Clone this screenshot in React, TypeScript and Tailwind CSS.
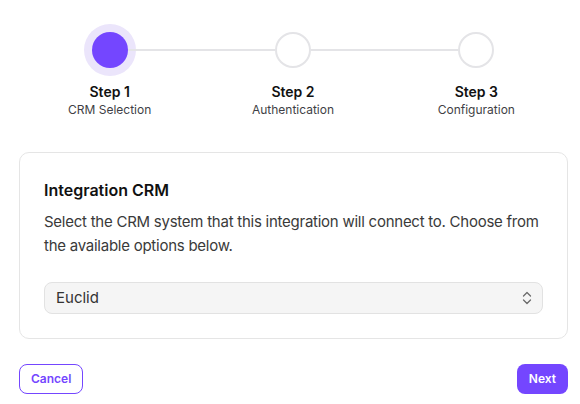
import { useState } from 'react';

interface Step {
  title: string;
  subtitle: string;
}

const STEPS: Step[] = [
  { title: 'Step 1', subtitle: 'CRM Selection' },
  { title: 'Step 2', subtitle: 'Authentication' },
  { title: 'Step 3', subtitle: 'Configuration' },
];

function UpDownIcon() {
  return (
    <svg width="10" height="14" viewBox="0 0 10 14" fill="none" stroke="#6b6b6b" strokeWidth="1.3" strokeLinecap="round" strokeLinejoin="round">
      <path d="M1.5 5 5 1.5 8.5 5" />
      <path d="M1.5 9 5 12.5 8.5 9" />
    </svg>
  );
}

export default function App() {
  const [current] = useState(0);
  const [crm, setCrm] = useState('Euclid');

  return (
    <div className="min-h-screen bg-white pl-[18px] pr-3 pt-8 text-[#1a1a1a] [font-family:Inter,'Liberation_Sans',sans-serif]">
      {/* ── STEPPER ── */}
      <div className="grid grid-cols-3">
        {STEPS.map((step, i) => (
          <div key={step.title} className="flex flex-col items-center">
            <div className="flex w-full items-center">
              <div className={`h-[2px] flex-1 ${i === 0 ? 'bg-transparent' : 'bg-[#e4e4e7]'}`} />
              <div
                className={`h-9 w-9 shrink-0 rounded-full ${
                  i === current
                    ? 'bg-[#7446ff] ring-8 ring-[#ebe5fb]'
                    : 'border-2 border-[#e4e4e7] bg-white'
                }`}
              />
              <div className={`h-[2px] flex-1 ${i === STEPS.length - 1 ? 'bg-transparent' : 'bg-[#e4e4e7]'}`} />
            </div>
            <div className="mt-[14px] text-sm font-semibold leading-5 text-[#111]">{step.title}</div>
            <div className="text-xs leading-4 text-[#3f3f46]">{step.subtitle}</div>
          </div>
        ))}
      </div>

      {/* ── CARD ── */}
      <div className="mt-[34px] ml-px rounded-[10px] border border-[#e5e5e5] px-6 pb-[24px] pt-[25px]">
        <h2 className="text-base font-semibold leading-6 text-[#111]">Integration CRM</h2>
        <p className="mt-2 text-[15px] leading-6 tracking-[-0.25px] text-[#3a3a3a]">
          Select the CRM system that this integration will connect to. Choose from the available options below.
        </p>
        <div className="relative mt-6">
          <select
            value={crm}
            onChange={(e) => setCrm(e.target.value)}
            className="h-8 w-full appearance-none rounded-lg border border-[#e2e2e2] bg-[#f5f5f5] pl-[11px] text-[15px] text-[#333] outline-none"
          >
            <option>Euclid</option>
            <option>Salesforce</option>
            <option>HubSpot</option>
          </select>
          <span className="pointer-events-none absolute right-[11px] top-1/2 -translate-y-1/2">
            <UpDownIcon />
          </span>
        </div>
      </div>

      {/* ── ACTIONS ── */}
      <div className="mt-[25px] flex items-center justify-between">
        <button
          type="button"
          className="ml-px h-[30px] rounded-lg border border-[#7446ff] px-[11px] text-xs font-semibold text-[#7446ff]"
        >
          Cancel
        </button>
        <button
          type="button"
          className="h-[30px] rounded-lg bg-[#7446ff] px-3 text-xs font-semibold text-white"
        >
          Next
        </button>
      </div>
    </div>
  );
}
